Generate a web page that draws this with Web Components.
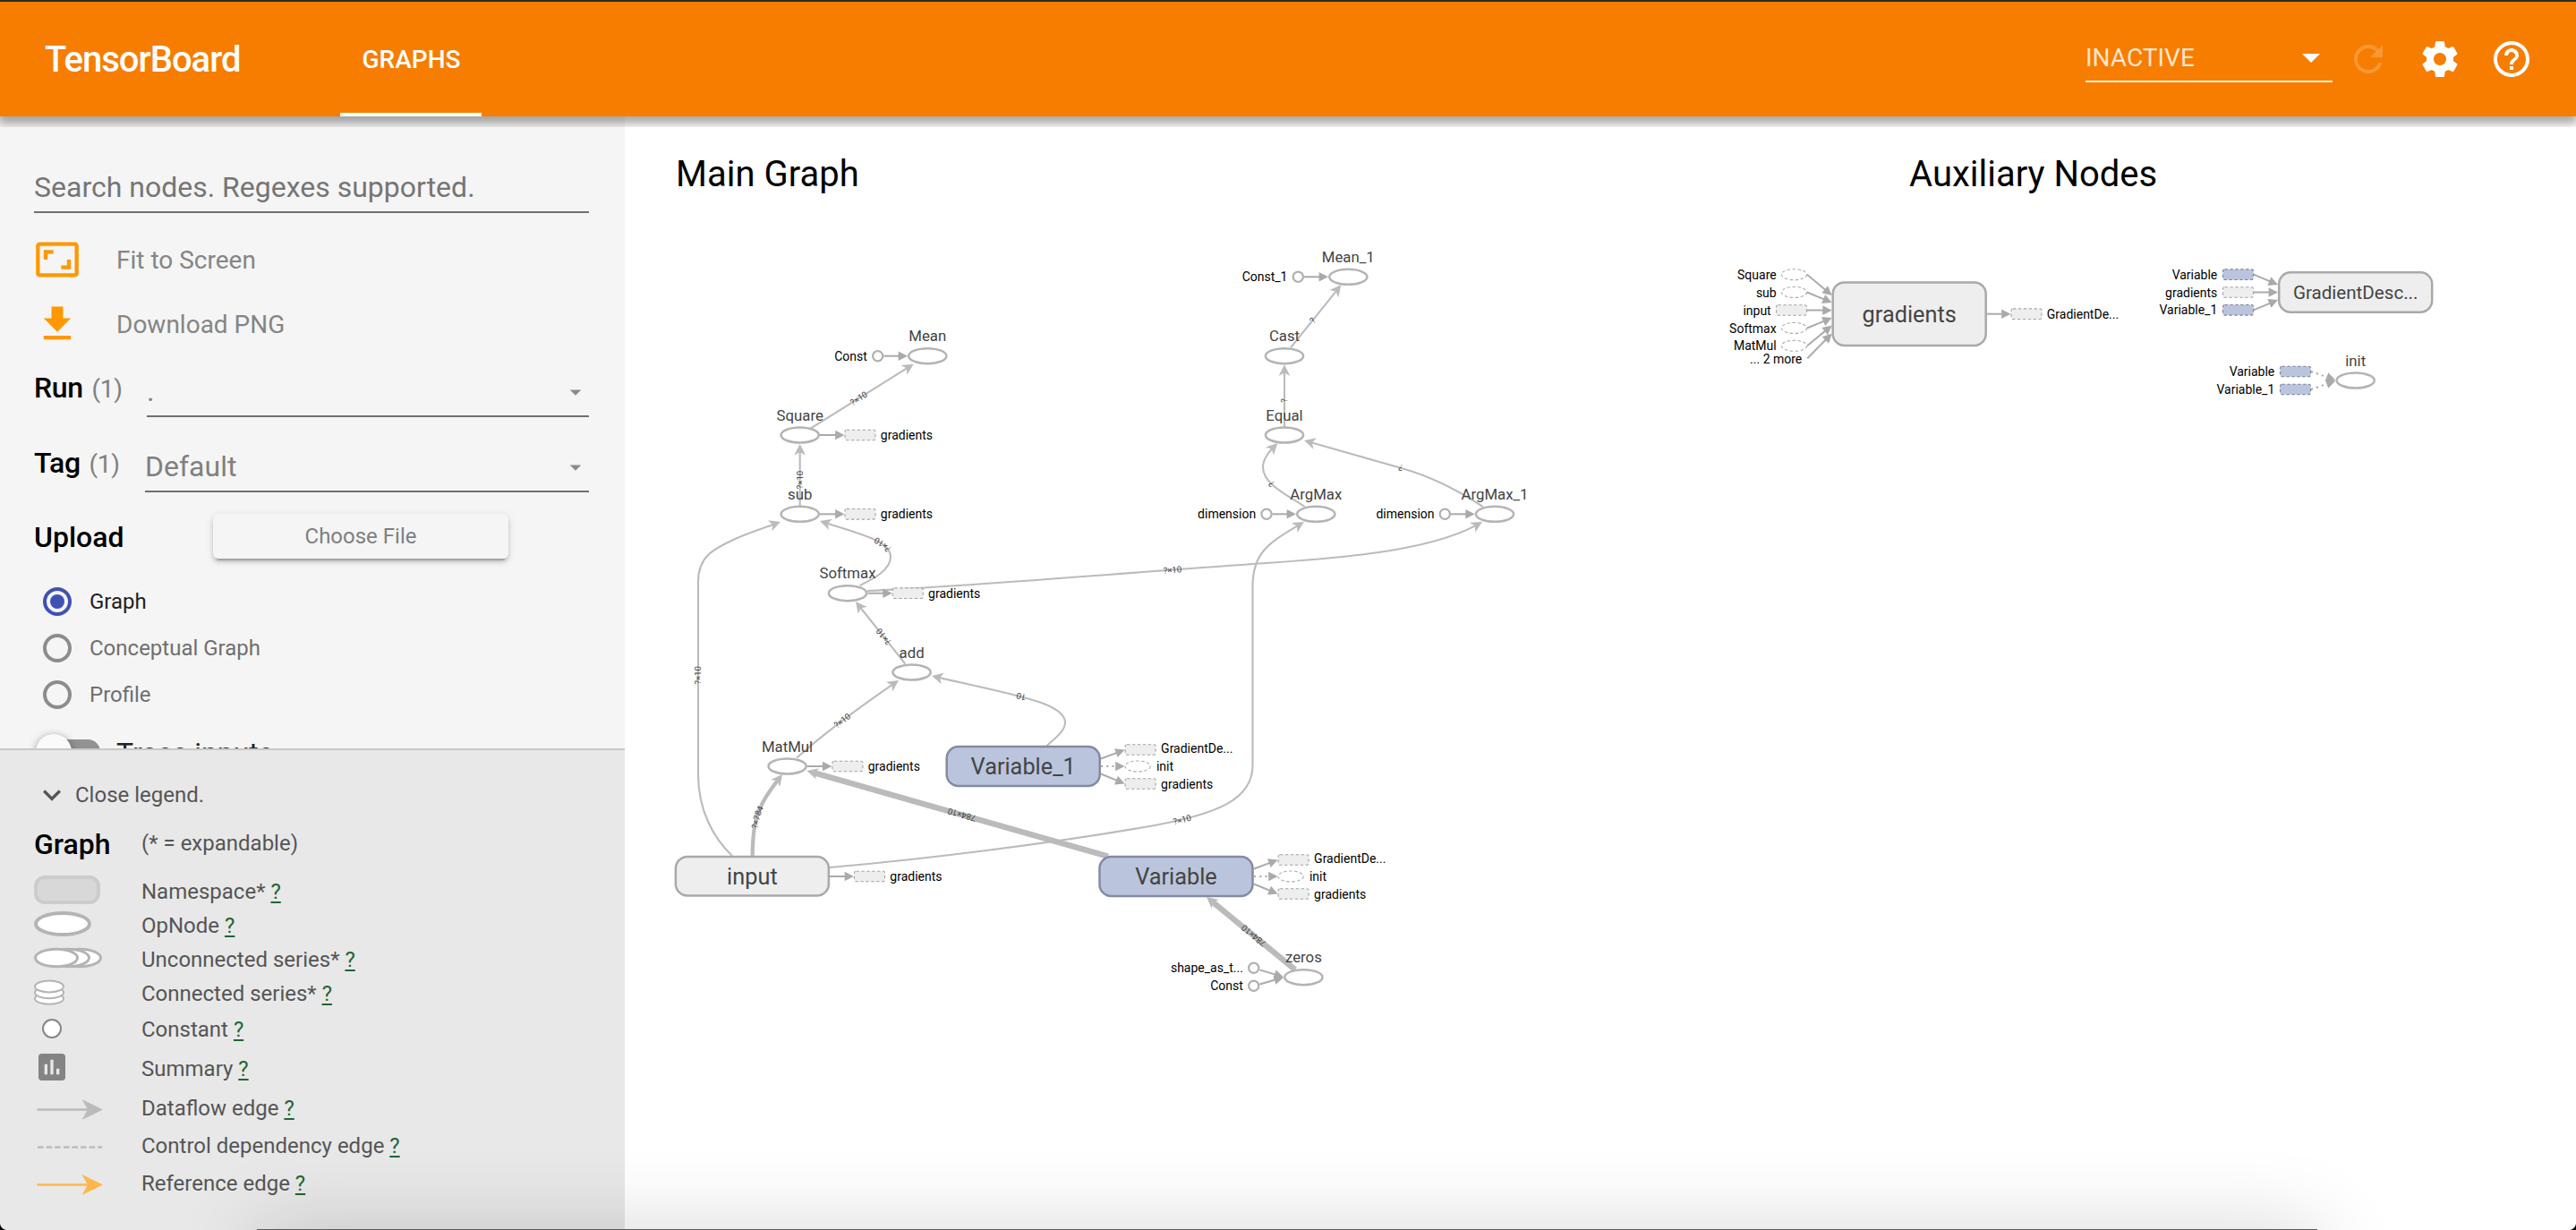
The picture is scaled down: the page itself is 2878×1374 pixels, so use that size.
<!DOCTYPE html>
<html lang="en">
<head>
<meta charset="utf-8">
<title>TensorBoard</title>
<style>
html,body{margin:0;height:100%;overflow:hidden;background:#fff}
body{font-family:Roboto,sans-serif}
</style>
</head>
<body>
<tb-app></tb-app>
<script>
const define = (name, html, setup) => {
  const tpl = document.createElement('template');
  tpl.innerHTML = html;
  customElements.define(name, class extends HTMLElement {
    constructor() {
      super();
      this.attachShadow({mode: 'open'}).append(tpl.content.cloneNode(true));
    }
    connectedCallback() { if (setup) setup(this, this.shadowRoot); }
  });
};

/* Material icons */
const ICONS = {
  refresh: 'M17.65 6.35C16.2 4.9 14.21 4 12 4c-4.42 0-7.99 3.58-7.99 8s3.57 8 7.99 8c3.73 0 6.84-2.55 7.73-6h-2.08c-.82 2.33-3.04 4-5.65 4-3.31 0-6-2.69-6-6s2.69-6 6-6c1.66 0 3.14.69 4.22 1.78L13 11h7V4l-2.35 2.35z',
  settings: 'M19.43 12.98c.04-.32.07-.64.07-.98s-.03-.66-.07-.98l2.11-1.65c.19-.15.24-.42.12-.64l-2-3.46c-.12-.22-.39-.3-.61-.22l-2.49 1c-.52-.4-1.08-.73-1.69-.98l-.38-2.65C14.46 2.18 14.25 2 14 2h-4c-.25 0-.46.18-.49.42l-.38 2.65c-.61.25-1.17.59-1.69.98l-2.49-1c-.23-.09-.49 0-.61.22l-2 3.46c-.13.22-.07.49.12.64l2.11 1.65c-.04.32-.07.65-.07.98s.03.66.07.98l-2.11 1.65c-.19.15-.24.42-.12.64l2 3.46c.12.22.39.3.61.22l2.49-1c.52.4 1.08.73 1.69.98l.38 2.65c.03.24.24.42.49.42h4c.25 0 .46-.18.49-.42l.38-2.65c.61-.25 1.17-.59 1.69-.98l2.49 1c.23.09.49 0 .61-.22l2-3.46c.12-.22.07-.49-.12-.64l-2.11-1.65zM12 15.5c-1.93 0-3.5-1.57-3.5-3.5s1.57-3.5 3.5-3.5 3.5 1.57 3.5 3.5-1.57 3.5-3.5 3.5z',
  help: 'M11 18h2v-2h-2v2zm1-16C6.48 2 2 6.48 2 12s4.48 10 10 10 10-4.48 10-10S17.52 2 12 2zm0 18c-4.41 0-8-3.59-8-8s3.59-8 8-8 8 3.59 8 8-3.59 8-8 8zm0-14c-2.21 0-4 1.79-4 4h2c0-1.1.9-2 2-2s2 .9 2 2c0 2-3 1.75-3 5h2c0-2.25 3-2.5 3-5 0-2.21-1.79-4-4-4z',
  fit: 'M19 12h-2v3h-3v2h5v-5zM7 9h3V7H5v5h2V9zm14-6H3c-1.1 0-2 .9-2 2v14c0 1.1.9 2 2 2h18c1.1 0 2-.9 2-2V5c0-1.1-.9-2-2-2zm0 16.01H3V4.99h18v14.02z',
  download: 'M19 9h-4V3H9v6H5l7 7 7-7zM5 18v2h14v-2H5z',
  expand: 'M16.59 8.59L12 13.17 7.41 8.59 6 10l6 6 6-6z',
  assessment: 'M19 3H5c-1.1 0-2 .9-2 2v14c0 1.1.9 2 2 2h14c1.1 0 2-.9 2-2V5c0-1.1-.9-2-2-2zM9 17H7v-7h2v7zm4 0h-2V7h2v10zm4 0h-2v-4h2v4z',
  drop: 'M7 10l5 5 5-5z'
};
define('tb-icon', `<style>:host{display:block;flex:none;line-height:0}svg{width:100%;height:100%;display:block;fill:currentColor}</style>
<svg viewBox="0 0 24 24"><path/></svg>`, (host, root) => {
  root.querySelector('path').setAttribute('d', ICONS[host.getAttribute('name')] || '');
});

define('tb-header', `<style>
:host{display:flex;height:128px;flex:none;border-top:2px solid #2b2b2b;background:#f77d00;color:#fff;box-sizing:content-box}
.title{width:330px;padding-left:50px;font-size:40px;font-weight:500;letter-spacing:-1px;line-height:130px;height:128px}
.tab{width:157px;padding-left:1px;height:124px;border-bottom:4px solid #fff;text-align:center;font-size:28px;font-weight:500;line-height:129px}
.spacer{flex:1}
.select{width:276px;height:43px;margin:45px 16px 0 0;border-bottom:2px solid rgba(255,255,255,.85);display:flex;font-size:28px;line-height:36px;color:rgba(255,255,255,.82)}
.select span{flex:1}
.select tb-icon{width:48px;height:48px;color:#fff;margin:-7px 0 0}
tb-icon.i{width:48px;height:48px;margin-top:40px;margin-right:32px}
tb-icon.off{opacity:.2}
tb-icon.last{margin-right:48px}
</style>
<div class="title">TensorBoard</div><div class="tab">GRAPHS</div><div class="spacer"></div>
<div class="select"><span>INACTIVE</span><tb-icon name="drop"></tb-icon></div>
<tb-icon class="i off" name="refresh"></tb-icon><tb-icon class="i" name="settings"></tb-icon><tb-icon class="i last" name="help"></tb-icon>`);

define('tb-action', `<style>
:host{display:flex;height:72px;align-items:center;font-size:28px;color:#858585}
::slotted(tb-icon){width:52px;height:52px;color:#ff9800;margin-right:40px}
</style><slot name="icon"></slot><slot></slot>`);

define('tb-select', `<style>
:host{display:flex;height:84px}
.label{width:var(--lw);font-size:32px;font-weight:500;color:#000;line-height:38px;padding-top:20px;white-space:nowrap;letter-spacing:-.3px}
.label small{font-size:28px;font-weight:400;color:#808080;margin-left:2px}
.field{flex:1;height:70px;border-bottom:2px solid #707070;display:flex;font-size:32px;line-height:38px;color:#808080}
.value{flex:1;padding-top:24px}
tb-icon{width:30px;height:30px;color:#8a8a8a;margin:29px 0 0}
</style>
<div class="label"><slot name="label"></slot> <small>(1)</small></div>
<div class="field"><div class="value"><slot></slot></div><tb-icon name="drop"></tb-icon></div>`);

define('tb-radio', `<style>
:host{display:flex;height:52px;align-items:center;padding-left:10px;font-size:24px;color:#6f6f6f}
.o{box-sizing:border-box;width:32px;height:32px;border:4px solid #8c8c8c;border-radius:50%;margin-right:20px;display:flex;align-items:center;justify-content:center}
:host([checked]){color:#212121}
:host([checked]) .o{border-color:#3f51b5}
:host([checked]) .o::after{content:"";width:16px;height:16px;border-radius:50%;background:#3f51b5}
</style><div class="o"></div><slot></slot>`);

define('tb-controls', `<style>
:host{display:block;height:706px;overflow:hidden;box-sizing:border-box;padding:0 40px 0 38px}
.search{height:58px;margin-top:48px;border-bottom:2px solid #707070;font-size:32px;line-height:63px;color:#757575;white-space:nowrap}
.actions{padding-top:16px}
.run{--lw:126px;margin-top:-4px}
.tag{--lw:124px}
.upload{display:flex;height:50px;margin-top:12px}
.upload b{font-size:32px;font-weight:500;line-height:53px;width:200px;color:#000}
.upload span{width:330px;height:50px;border-radius:6px;text-align:center;font-size:24px;line-height:50px;color:#808080;background:#f5f5f5;box-shadow:0 4px 4px rgba(0,0,0,.14),0 2px 10px rgba(0,0,0,.12),0 6px 2px -4px rgba(0,0,0,.2)}
.radios{padding-top:22px}
.toggle{display:flex;margin-top:18px;font-size:32px;line-height:42px;color:#212121}
.bar{width:72px;height:28px;border-radius:14px;background:#929292;margin:6px 18px 0 2px}
.bar i{display:block;width:40px;height:40px;border-radius:50%;background:#fafafa;margin-top:-6px;box-shadow:0 2px 10px rgba(0,0,0,.4)}
</style>
<div class="search">Search nodes. Regexes supported.</div>
<div class="actions"><tb-action><tb-icon slot="icon" name="fit"></tb-icon>Fit to Screen</tb-action><tb-action><tb-icon slot="icon" name="download"></tb-icon>Download PNG</tb-action></div>
<tb-select class="run"><span slot="label">Run</span>.</tb-select>
<tb-select class="tag"><span slot="label">Tag</span>Default</tb-select>
<div class="upload"><b>Upload</b><span>Choose File</span></div>
<div class="radios"><tb-radio checked>Graph</tb-radio><tb-radio>Conceptual Graph</tb-radio><tb-radio>Profile</tb-radio></div>
<div class="toggle"><div class="bar"><i></i></div>Trace inputs</div>`);

define('legend-row', `<style>
:host{display:flex;align-items:center;font-size:24px;line-height:28px;color:#555;white-space:pre}
.pic{width:120px;flex:none;line-height:0}
u{color:#1f6433;text-decoration-thickness:2px;text-underline-offset:3px}
::slotted(svg){display:block;overflow:visible}
</style><div class="pic"><slot name="pic"></slot></div><slot></slot> <u>?</u>`);

define('tb-legend', `<style>
:host{display:block;flex:1;background:#e8e8e8;border-top:2px solid #c8c8c8;padding:0 0 0 38px}
.close{display:flex;align-items:center;height:28px;padding-top:36px;font-size:24px;color:#555}
.close tb-icon{width:40px;height:40px;margin:0 6px 0 0}
.head{display:flex;align-items:baseline;margin-top:22px;height:38px;font-size:32px;font-weight:500;line-height:38px;color:#000}
.head span{font-size:24px;font-weight:400;color:#555;position:relative;top:-4px}
.head b{width:120px;font-weight:500}
</style>
<div class="close"><tb-icon name="expand"></tb-icon>Close legend.</div>
<div class="head"><b>Graph</b><span>(* = expandable)</span></div>
<legend-row style="height:38px;margin-top:15px"><svg slot="pic" width="76" height="38"><rect x="2" y="3" width="70" height="28" rx="10" fill="#d8d8d8" stroke="#ccc" stroke-width="4"/></svg>Namespace*</legend-row>
<legend-row style="height:38px"><svg slot="pic" width="76" height="38"><ellipse cx="32" cy="17" rx="30" ry="12" fill="#fff" stroke="#b4b4b4" stroke-width="4"/></svg>OpNode</legend-row>
<legend-row style="height:38px"><svg slot="pic" width="76" height="38"><g fill="#fff" stroke="#b4b4b4" stroke-width="3"><ellipse cx="51" cy="17" rx="23.5" ry="9.7"/><ellipse cx="38" cy="17" rx="23.5" ry="9.7"/><ellipse cx="25" cy="17" rx="23.5" ry="9.7"/></g></svg>Unconnected series*</legend-row>
<legend-row style="height:38px"><svg slot="pic" width="76" height="38"><g fill="#fff" stroke="#b4b4b4" stroke-width="2"><ellipse cx="17" cy="24.4" rx="16" ry="6.4"/><ellipse cx="17" cy="17.8" rx="16" ry="6.4"/><ellipse cx="17" cy="11" rx="16" ry="6.4"/></g></svg>Connected series*</legend-row>
<legend-row style="height:42px"><svg slot="pic" width="76" height="42"><circle cx="20" cy="20" r="10" fill="#fff" stroke="#868686" stroke-width="2"/></svg>Constant</legend-row>
<legend-row style="height:46px"><svg slot="pic" width="76" height="46"><path transform="translate(0 1) scale(1.6667)" fill="#848484" d="${ICONS.assessment}"/></svg>Summary</legend-row>
<legend-row style="height:42px"><svg slot="pic" width="76" height="42"><path d="M4.500 22.500H60" stroke="#bbb" stroke-width="2.600" stroke-linecap="round"/><path d="M53.500 11L77 22.500L53.500 34L60 22.500Z" fill="#bbb"/></svg>Dataflow edge</legend-row>
<legend-row style="height:42px"><svg slot="pic" width="76" height="42"><path d="M4 22.500H76" stroke="#bbb" stroke-width="2.600" stroke-dasharray="6.600 3"/></svg>Control dependency edge</legend-row>
<legend-row style="height:42px"><svg slot="pic" width="76" height="42"><path d="M4.500 22.500H60" stroke="#ffb74d" stroke-width="2.600" stroke-linecap="round"/><path d="M53.500 11L77 22.500L53.500 34L60 22.500Z" fill="#ffb74d"/></svg>Reference edge</legend-row>`);

define('tb-graph', `<style>
:host{display:block;flex:1;background:#fff;overflow:hidden}
svg{display:block;width:2180px;height:1244px;font-family:Roboto,sans-serif}
</style><svg viewBox="698 130 2180 1244"></svg>`, (host, root) => {
  const svg = root.querySelector('svg');
  const NS = 'http://www.w3.org/2000/svg';
  const el = (tag, attrs, text) => {
    const e = document.createElementNS(NS, tag);
    for (const k in attrs) e.setAttribute(k, attrs[k]);
    if (text !== undefined) e.textContent = text;
    svg.appendChild(e);
    return e;
  };
  const label = (x, y, s, size, anchor, fill) =>
    el('text', {x, y, 'font-size': size, 'text-anchor': anchor || 'start', fill: fill || '#000'}, s);

  label(755, 208, 'Main Graph', 40);
  label(2133, 208, 'Auxiliary Nodes', 40);

  /* Dataflow edges: path, label, label centre, stroke width */
  const edges = [
    ['M893.700 565V496', '?×10', 893.7, 536, 2.1],
    ['M906 478.300L1020.700 406.700', '?×10', 959.5, 445, 2.1],
    ['M840.700 956C840.700 935 843 917 849 903C855 889 864 878 874 865', '?×784', 846.4, 913, 4.3],
    ['M818 956C797 936 780 905 780 865V650C780 620 800 612 822 601.700C840 594 856 589 872 583', '?×10', 780, 754.3, 2.1],
    ['M960.700 654C975 647 995 637 995 622C995 604 962 597 916 582', '?×10', 984.3, 610.7, 2.1],
    ['M1011.400 741.700L956 672', '?×10', 986.4, 711.7, 2.1],
    ['M890 846.700C920 820 950 797 1004 760', '?×10', 941, 805, 2.1],
    ['M1169.600 833C1180 824 1190 816 1190 807C1190 784 1125 775 1041 755', '10', 1140.4, 779.7, 2.1],
    ['M1238 956.700L901.400 861', '784×10', 1074.3, 910, 6.4],
    ['M927 969C1030 960 1170 943 1290 922C1360 909 1399.500 893 1399.500 855V655C1399.500 615 1420 605 1457 583', '?×10', 1320.7, 915.5, 2.1],
    ['M969 660C1080 655 1230 642 1400 630C1490 624 1600 617 1656 583', '?×10', 1310, 637.3, 2.1],
    ['M1435 477V407.300', '?', 1435, 447.7, 2.1],
    ['M1442 388.300L1498.300 318.300', '?', 1466.3, 357.5, 2.1],
    ['M1457.700 566C1440 554 1411 541 1411 522C1411 511 1420 502 1427.300 495', '?', 1420, 541, 2.1],
    ['M1656.700 566C1625 545 1595 531 1565 522.700C1530 513 1495 503 1457 492', '?', 1565, 522.7, 2.1],
    ['M1447 1083.300L1348 1002', '784×10', 1400, 1045.7, 6.4]
  ];
  edges.forEach(([d, text, lx, ly, w], i) => {
    const p = el('path', {d, id: 'e' + i, fill: 'none', stroke: 'none'});
    const L = p.getTotalLength();
    el('path', {d, fill: 'none', stroke: '#bbb', 'stroke-width': w,
      'stroke-dasharray': (L - 8) + ' ' + L});
    const tip = p.getPointAtLength(L), back = p.getPointAtLength(L - 8);
    const a = Math.atan2(tip.y - back.y, tip.x - back.x) * 180 / Math.PI;
    el('path', {d: 'M0 0L-12.600 -6.400L-9.300 0L-12.600 6.400Z', fill: '#bbb',
      transform: `translate(${tip.x} ${tip.y}) rotate(${a})`});
    let best = 0, dist = 1e9;
    for (let s = 0; s <= L; s += .5) {
      const q = p.getPointAtLength(s), r = Math.hypot(q.x - lx, q.y - ly);
      if (r < dist) { dist = r; best = s; }
    }
    const t = el('text', {'font-size': 9.6, 'text-anchor': 'middle', fill: '#444', dy: 3.4});
    const tp = document.createElementNS(NS, 'textPath');
    tp.setAttribute('href', '#e' + i);
    tp.setAttribute('startOffset', best);
    tp.textContent = text;
    t.appendChild(tp);
  });

  /* Short annotation arrows */
  const arrow = (x1, y1, x2, y2, dashed) => {
    const a = Math.atan2(y2 - y1, x2 - x1), L = Math.hypot(x2 - x1, y2 - y1);
    const o = {x1, y1, x2: x1 + Math.cos(a) * (L - 8), y2: y1 + Math.sin(a) * (L - 8), stroke: '#aaa', 'stroke-width': 2};
    if (dashed) o['stroke-dasharray'] = '2.200 4';
    el('line', o);
    el('path', {d: 'M0 0L-10.400 -5.300V5.300Z', fill: '#aaa', transform: `translate(${x2} ${y2}) rotate(${a * 180 / Math.PI})`});
  };
  const stub = (x, y, kind) => {
    const s = {'stroke-width': 1.1, 'stroke-dasharray': '3.400 2.500'};
    if (kind === 'op') el('ellipse', {...s, cx: x + 14.5, cy: y, rx: 14.2, ry: 6, fill: '#fff', stroke: '#aaa'});
    else el('rect', {...s, x: x + .5, y: y - 5.8, width: 34, height: 11.6, rx: 2,
      fill: kind === 'var' ? '#bac5dd' : '#eee', stroke: kind === 'var' ? '#7c8398' : '#a4a4a4'});
  };
  const op = (x, y, name) => {
    el('ellipse', {cx: x, cy: y, rx: 21.1, ry: 8.5, fill: '#fff', stroke: '#b4b4b4', 'stroke-width': 2.5});
    label(x, y - 16.4, name, 16.8, 'middle', '#444');
  };
  const meta = (x, y, h, name, size, variable) => {
    el('rect', {x: x - 85.5, y: y - h / 2, width: 171, height: h, rx: 13,
      fill: variable ? '#bac5dd' : '#eee', stroke: variable ? '#848ba0' : '#a9a9a9', 'stroke-width': 2.5});
    label(x, y + size * .36, name, size, 'middle', '#444');
  };
  const out = (x, y, tx, ty, name, kind, dashed) => {
    arrow(x, y, tx, ty, dashed);
    stub(tx, ty, kind);
    if (name) label(tx + (kind === 'op' ? 35.3 : 40.3), ty + 5.1, name, 14);
  };
  const constant = (x, y, tx, ty, name) => {
    arrow(x + 6.7, y + (ty - y) * .2, tx, ty);
    el('circle', {cx: x, cy: y, r: 5.6, fill: '#fff', stroke: '#b0b0b0', 'stroke-width': 2.2});
    label(x - 11.8, y + 5.1, name, 14, 'end');
  };

  [[893.7, 486], [893.7, 574.3], [947, 662.7], [879.6, 856]].forEach(([x, y]) =>
    out(x + 22.3, y, x + 49.8, y, 'gradients'));
  out(926.8, 979, 954, 979, 'gradients');
  [[1230, 856], [1401, 979]].forEach(([x, y]) => {
    out(x, y - 8.5, x + 26.6, y - 18.5);
    out(x, y, x + 26.6, y, 'init', 'op', true);
    out(x, y + 8.5, x + 26.6, y + 19.5);
    label(x + 67.1, y - 14.9, 'GradientDe...', 14);
    label(x + 67.1, y + 25.2, 'gradients', 14);
  });
  constant(980.7, 397.7, 1014, 397.7, 'Const');
  constant(1450.3, 309.3, 1484, 309.3, 'Const_1');
  constant(1415, 574.3, 1448, 574.3, 'dimension');
  constant(1614.3, 574.3, 1647.7, 574.3, 'dimension');
  constant(1400.7, 1081.3, 1434, 1091.5, 'shape_as_t...');
  constant(1400.7, 1101.3, 1434, 1091.9, 'Const');

  op(1036.3, 397.7, 'Mean'); op(893.7, 486, 'Square'); op(893.7, 574.3, 'sub');
  op(947, 662.7, 'Softmax'); op(1018.6, 751, 'add'); op(879.6, 856, 'MatMul');
  op(1506.3, 309.3, 'Mean_1'); op(1435, 397.7, 'Cast'); op(1435, 486, 'Equal');
  op(1470.3, 574.3, 'ArgMax'); op(1670, 574.3, 'ArgMax_1'); op(1456.4, 1091.7, 'zeros');
  meta(840.4, 978.7, 43.4, 'input', 25.3);
  meta(1143.2, 856, 44, 'Variable_1', 25.3, true);
  meta(1314, 979, 44, 'Variable', 25.3, true);

  /* Auxiliary nodes */
  [['Square', 306.7, 330], ['sub', 326.5, 338], ['input', 346.5, 346.7], ['Softmax', 366.5, 355], ['MatMul', 386.3, 363.5]].forEach(([n, y, ty]) => {
    const box = n === 'input';
    arrow(2019, y, 2046.7, ty);
    stub(box ? 1984 : 1990, y, box ? 'ns' : 'op');
    label(box ? 1978.7 : 1984.7, y + 5.1, n, 14, 'end');
  });
  arrow(2019.3, 400.3, 2046.7, 372.5);
  label(2013.3, 406, '... 2 more', 14, 'end');
  meta(2133.2, 350.7, 70.6, 'gradients', 25.3);
  out(2219.7, 350.7, 2246.5, 350.7, 'GradientDe...');

  [['Variable', 306.7, 318, 'var'], ['gradients', 326.5, 326.5, 'ns'], ['Variable_1', 346.3, 335, 'var']].forEach(([n, y, ty, k]) => {
    arrow(2517.7, y, 2545, ty);
    stub(2483, y, k);
    label(2477.3, y + 5, n, 14, 'end');
  });
  meta(2631.7, 326.5, 44.5, 'GradientDesc...', 20.6);
  [['Variable', 415, 424.6], ['Variable_1', 435, 425.4]].forEach(([n, y, ty]) => {
    arrow(2582, y, 2609.300, ty, true);
    stub(2547, y, 'var');
    label(2541.3, y + 5, n, 14, 'end');
  });
  op(2631.7, 425, 'init');
});

define('tb-app', `<style>
:host{display:flex;flex-direction:column;width:2878px;height:1374px;overflow:hidden;position:relative;background:#fff}
.body{flex:1;display:flex;min-height:0}
aside{width:698px;flex:none;background:#f5f5f5;display:flex;flex-direction:column}
.shade{position:absolute;left:0;right:0;top:130px;height:12px;overflow:hidden}
.shade i{display:block;height:10px;margin:-10px 0 0;box-shadow:0 5px 12px 2px rgba(0,0,0,.4)}
.dock{position:absolute;left:287px;width:2302px;top:1373px;height:80px;background:#5a5a5a;box-shadow:0 0 90px rgba(0,0,0,.17)}
.c{position:absolute;bottom:0;width:8px;height:8px}
.l{left:0;background:radial-gradient(circle at 100% 0,transparent 7.500px,#000 8.500px)}
.r{right:0;background:radial-gradient(circle at 0 0,transparent 7.500px,#000 8.500px)}
</style>
<tb-header></tb-header>
<div class="body"><aside><tb-controls></tb-controls><tb-legend></tb-legend></aside><tb-graph></tb-graph></div>
<div class="shade"><i></i></div><div class="dock"></div><div class="c l"></div><div class="c r"></div>`);
</script>
</body>
</html>
